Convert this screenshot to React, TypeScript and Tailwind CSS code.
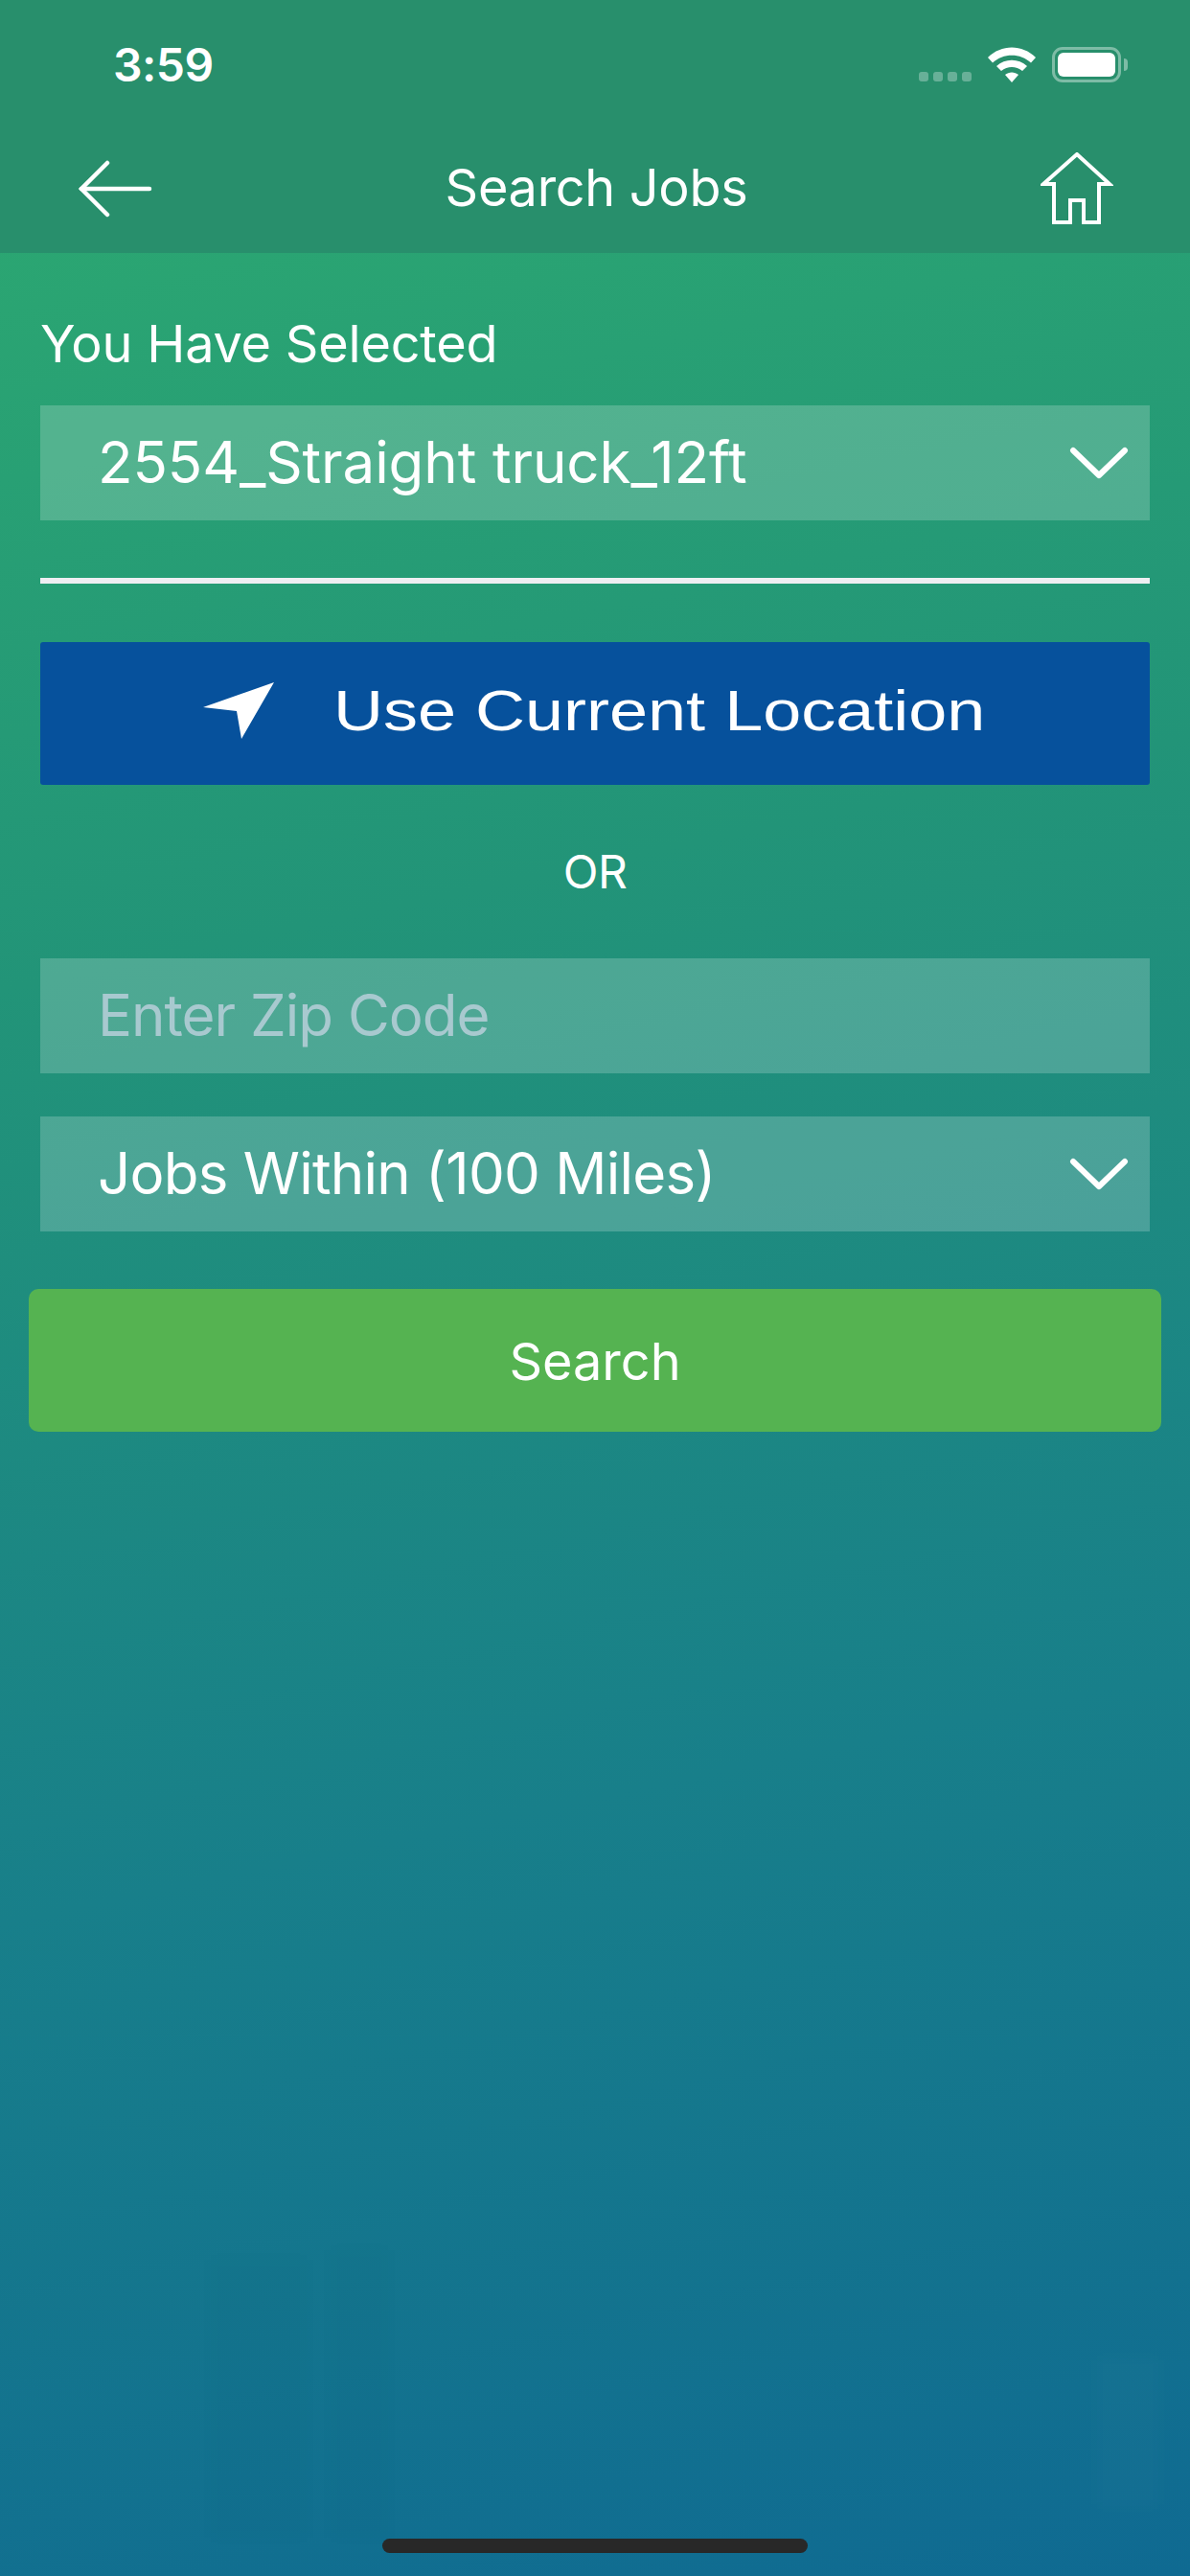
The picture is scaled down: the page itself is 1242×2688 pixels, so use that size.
const sf = "font-['Inter','Liberation_Sans',sans-serif]";

function BackArrow() {
  return (
    <svg width="78" height="60" viewBox="0 0 78 60" fill="none" stroke="white" strokeWidth="4.5" strokeLinecap="round">
      <path d="M31 3 L4 30 L31 57" />
      <path d="M4 30 H75" />
    </svg>
  );
}

function HomeIcon() {
  return (
    <svg width="76" height="76" viewBox="0 0 76 76" fill="none" stroke="white" strokeWidth="4" strokeLinejoin="miter">
      <path d="M38 2 L72 33 H61 V73 H45 V50 H31 V73 H14 V33 H3 Z" />
    </svg>
  );
}

function WifiIcon() {
  return (
    <svg width="50" height="37" viewBox="0 0 50 37" fill="white">
      <path d="M0 11 C14 -3 36 -3 50 11 L45 16.500 C34 6 16 6 5 16.500 Z" />
      <path d="M9 20 C18 11.500 32 11.500 41 20 L36 25 C29.500 19.500 20.500 19.500 14 25 Z" />
      <path d="M18 29 C22 25.500 28 25.500 32 29 L25 37 Z" />
    </svg>
  );
}

function Battery() {
  return (
    <div className="flex items-center gap-[3px]">
      <div className="h-[37px] w-[72px] rounded-[11px] border-[3px] border-white/40 p-[3px]">
        <div className="h-full w-full rounded-[6px] bg-white" />
      </div>
      <div className="h-[13px] w-[4px] rounded-r-full bg-white/40" />
    </div>
  );
}

function Chevron() {
  return (
    <svg width="62" height="34" viewBox="0 0 62 34" fill="none" stroke="white" strokeWidth="6" strokeLinecap="round" strokeLinejoin="round">
      <path d="M4 4 L31 30 L58 4" />
    </svg>
  );
}

function SelectBox({ label, className }: { label: string; className: string }) {
  return (
    <div className="flex h-[120px] items-center justify-between bg-white/20 pl-[60px] pr-[22px]">
      <span className={`mt-[-3px] text-[60px] leading-none text-white ${className}`}>{label}</span>
      <Chevron />
    </div>
  );
}

export default function App() {
  return (
    <div
      className={`relative flex h-[2688px] w-[1242px] flex-col overflow-hidden bg-[linear-gradient(168deg,#2ba672_8%,#229478_35%,#187f8a_68%,#0f6a92_100%)] ${sf}`}
    >
      {/* faint blurred skyline in the background */}
      <div className="absolute bottom-[40px] left-[220px] h-[290px] w-[100px] bg-black/[0.012] blur-[8px]" />
      <div className="absolute bottom-[40px] left-[345px] h-[300px] w-[60px] bg-black/[0.012] blur-[8px]" />
      <div className="absolute bottom-[70px] right-[30px] h-[160px] w-[70px] bg-white/[0.015] blur-[8px]" />

      <header className="relative flex h-[264px] flex-col bg-[#288f6c] text-white">
        <div className="flex h-[134px] items-center justify-between pl-[118px] pr-[65px]">
          <span className="mt-[2px] text-[48px] font-semibold leading-none tracking-[-0.5px]">3:59</span>
          <div className="flex items-center">
            <div className="mr-[17px] mt-[26px] flex gap-[5px]">
              <span className="h-[10px] w-[10px] rounded-[3px] bg-white/30" />
              <span className="h-[10px] w-[10px] rounded-[3px] bg-white/30" />
              <span className="h-[10px] w-[10px] rounded-[3px] bg-white/30" />
              <span className="h-[10px] w-[10px] rounded-[3px] bg-white/30" />
            </div>
            <div className="mr-[17px] flex">
              <WifiIcon />
            </div>
            <Battery />
          </div>
        </div>
        <div className="flex flex-1 items-start justify-between pl-[81px] pr-[80px]">
          <div className="mt-[33px] flex">
            <BackArrow />
          </div>
          <h1 className="mt-[29px] text-[54px] font-normal leading-[66px] tracking-[-0.3px]">Search Jobs</h1>
          <div className="mt-[25px] flex">
            <HomeIcon />
          </div>
        </div>
      </header>

      <main className="relative flex flex-col px-[42px] text-white">
        <p className="mt-[62px] text-[54px] leading-[66px] tracking-[-0.2px]">You Have Selected</p>
        <div className="mt-[31px]">
          <SelectBox label="2554_Straight truck_12ft" className="tracking-[-0.1px]" />
        </div>
        <div className="mt-[60px] h-[6px] bg-[#eeeef2]" />

        <button className="mt-[61px] flex h-[149px] items-center justify-start gap-[62px] rounded-[3px] bg-[#06519c] pl-[170px] font-['Liberation_Sans',sans-serif]">
          <svg width="74" height="62" viewBox="0 0 74 62" fill="white" className="mt-[-7px]">
            <path d="M74 2 L0 28 L35 32 L40 61 Z" />
          </svg>
          <span className="mt-[-5px] origin-left scale-x-[1.2] text-[60px] leading-none">Use Current Location</span>
        </button>

        <p className="mt-[62px] text-center text-[48px] leading-[58px] tracking-[-0.5px]">OR</p>

        <input
          placeholder="Enter Zip Code"
          className="mt-[61px] h-[120px] w-full bg-white/20 pb-[3px] pl-[60px] text-[60px] tracking-[-1px] text-white outline-none placeholder:text-[#a8c9cf]"
        />
        <div className="mt-[45px]">
          <SelectBox label="Jobs Within (100 Miles)" className="tracking-[-0.75px]" />
        </div>
      </main>

      <button className="relative mx-[30px] mt-[60px] h-[149px] rounded-[10px] bg-[#55b351] pt-[2px] text-[54px] tracking-[0px] text-white">
        Search
      </button>

      <div className="relative mt-auto mb-[24px] h-[15px] w-[444px] self-center rounded-full bg-[#282828]" />
    </div>
  );
}
